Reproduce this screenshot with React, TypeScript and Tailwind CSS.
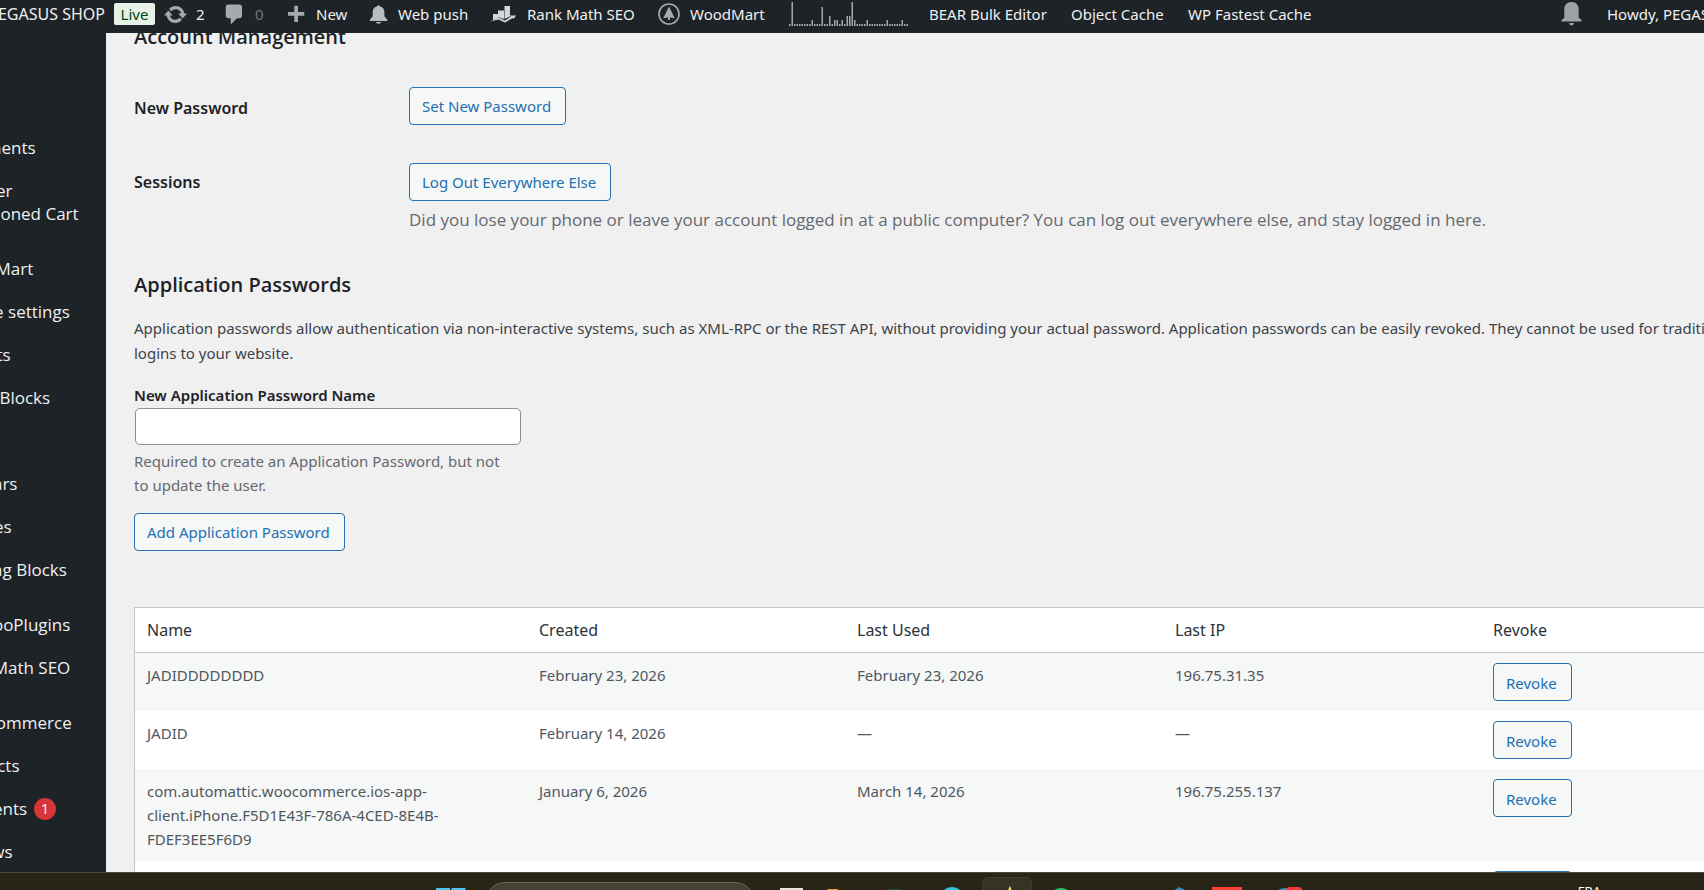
import type { ReactNode } from "react";

interface MenuItem {
  label: string;
  spaced?: boolean;
  badge?: number;
}

interface AppPassword {
  name: string;
  created: string;
  lastUsed: string;
  lastIp: string;
}

const menuItems: MenuItem[] = [
  { label: "Comments" },
  { label: "Recover Abandoned Cart" },
  { label: "WoodMart", spaced: true },
  { label: "Theme settings" },
  { label: "Layouts" },
  { label: "HTML Blocks" },
  { label: "" },
  { label: "Sidebars" },
  { label: "Themes" },
  { label: "Floating Blocks" },
  { label: "My WooPlugins", spaced: true },
  { label: "Rank Math SEO" },
  { label: "WooCommerce", spaced: true },
  { label: "Products" },
  { label: "Payments", badge: 1 },
  { label: "Reviews" },
];

const appPasswords: AppPassword[] = [
  { name: "JADIDDDDDDDD", created: "February 23, 2026", lastUsed: "February 23, 2026", lastIp: "196.75.31.35" },
  { name: "JADID", created: "February 14, 2026", lastUsed: "—", lastIp: "—" },
  {
    name: "com.automattic.woocommerce.ios-app-client.iPhone.F5D1E43F-786A-4CED-8E4B-FDEF3EE5F6D9",
    created: "January 6, 2026",
    lastUsed: "March 14, 2026",
    lastIp: "196.75.255.137",
  },
  { name: "", created: "", lastUsed: "", lastIp: "" },
];

const activity = [
  2, 24, 2, 2, 2, 2, 2, 2, 2, 6, 2, 2, 2, 19, 2, 2, 10, 2, 6, 6, 2, 6, 2, 10,
  10, 24, 6, 2, 2, 2, 2, 6, 2, 2, 2, 2, 2, 2, 2, 6, 2, 2, 2, 2, 2, 6, 2, 2,
];

const Dashicon = ({ d }: { d: string }) => (
  <svg viewBox="0 0 20 20" className="size-[25px] shrink-0 fill-[#a7aaad]" aria-hidden="true">
    <path d={d} />
  </svg>
);

const UPDATE =
  "M10.2 3.28c3.53 0 6.43 2.61 6.92 6h2.08l-3.5 4-3.5-4h2.32c-.45-1.97-2.21-3.45-4.32-3.45-1.45 0-2.73.71-3.54 1.78L4.95 5.66C6.23 4.2 8.11 3.28 10.2 3.28zm-.4 13.44c-3.52 0-6.43-2.61-6.92-6H.8l3.5-4c1.17 1.33 2.33 2.67 3.5 4H5.48c.45 1.97 2.21 3.45 4.32 3.45 1.45 0 2.73-.71 3.54-1.78l1.71 1.95c-1.28 1.46-3.15 2.38-5.25 2.38z";
const COMMENT =
  "M5 2h9q.82 0 1.41.59T16 4v7q0 .82-.59 1.41T14 13h-2l-5 5v-5H5q-.82 0-1.41-.59T3 11V4q0-.82.59-1.41T5 2z";
const PLUS = "M17 8v3h-5v5H9v-5H4V8h5V3h3v5h5z";

const PushBell = () => (
  <svg viewBox="0 0 19 21" className="h-[21px] w-[19px] shrink-0 fill-[#b9bbbd]" aria-hidden="true">
    <path d="M8.3 2.2a1.3 1.3 0 0 1 2.5 0c2.9.6 4.6 2.8 4.6 5.8v4.2l2.9 3.6v1.2H.8v-1.2l2.9-3.6V8c0-3 1.7-5.200 4.600-5.800z" />
    <path d="M6.800 18h5.500a2.800 2.200 0 0 1-5.500 0z" />
  </svg>
);

const RankMath = () => (
  <svg viewBox="0 0 26 18" className="h-[18px] w-[26px] shrink-0 fill-[#d5d7d8]" aria-hidden="true">
    <path d="M3 9h5v4l-5 2zM8 5.500h6v8.500l-6-2zM14.500 1H20v10.500L14.500 14z" />
    <path d="M0 16.500 8.500 12.500l6.500 3 6-4-1.500-1H26l-2.500 3.500-.8-1L15 17.500l-6.500-3z" />
  </svg>
);

const WoodMart = () => (
  <svg viewBox="0 0 22 22" className="size-[22px] shrink-0" aria-hidden="true">
    <circle cx="11" cy="11" r="10" fill="none" stroke="#a7aaad" strokeWidth="1.600" />
    <path d="m11 3.500 5.800 11.800-4.800-.8v2.500h-2v-2.500l-4.800.8z" fill="#a7aaad" />
  </svg>
);

const NoticeBell = () => (
  <svg viewBox="0 0 21 24" className="h-6 w-[21px] shrink-0 fill-[#9ca2a7]" aria-hidden="true">
    <path d="M10.500 0c4.700 0 7.200 3.300 7.200 7.500v8.300l2.800 2.200v1.500H.5V18l2.800-2.200V7.500C3.300 3.300 5.800 0 10.500 0zM8 21h5c-.3 1.600-1.200 2.500-2.500 2.500S8.300 22.600 8 21z" />
  </svg>
);

const ActivityBars = () => (
  <svg viewBox="0 0 120 24" className="h-6 w-[120px] shrink-0 fill-[#a5a8aa]" aria-hidden="true">
    {activity.map((h, i) => (
      <rect key={i} x={i * 2.5} y={24 - h} width="1.500" height={h} />
    ))}
  </svg>
);

const BarLink = ({ className, children }: { className: string; children: ReactNode }) => (
  <a href="#" className={`flex shrink-0 items-center whitespace-nowrap ${className}`}>
    {children}
  </a>
);

const AdminBar = () => (
  <header className="flex h-[33px] shrink-0 items-center overflow-hidden bg-[#1d2327] pb-[5px] text-[15px] text-[#f0f0f1]">
    <a href="#" className="flex w-[105px] shrink-0 justify-end overflow-hidden text-base whitespace-nowrap">
      PEGASUS SHOP
    </a>
    <BarLink className="ml-[9px] h-[22px] w-[41px] justify-center rounded-xs bg-[#e6f2e8] text-[15px] text-[#00450c]">
      Live
    </BarLink>
    <BarLink className="ml-2 w-[59px] gap-2">
      <Dashicon d={UPDATE} />2
    </BarLink>
    <BarLink className="w-[61px] gap-2 text-[#72777c]">
      <Dashicon d={COMMENT} />0
    </BarLink>
    <BarLink className="w-[86px] gap-2">
      <Dashicon d={PLUS} />
      New
    </BarLink>
    <BarLink className="w-[121px] gap-[10px]">
      <PushBell />
      Web push
    </BarLink>
    <BarLink className="w-[168px] gap-[11px]">
      <RankMath />
      Rank Math SEO
    </BarLink>
    <BarLink className="w-[131px] gap-[10px]">
      <WoodMart />
      WoodMart
    </BarLink>
    <BarLink className="w-[140px]">
      <ActivityBars />
    </BarLink>
    <BarLink className="w-[142px]">BEAR Bulk Editor</BarLink>
    <BarLink className="w-[117px]">Object Cache</BarLink>
    <BarLink className="">WP Fastest Cache</BarLink>
    <div className="ml-auto flex w-[143px] shrink-0 gap-[25px] overflow-hidden">
      <button type="button" aria-label="Notifications">
        <NoticeBell />
      </button>
      <BarLink className="">Howdy, PEGASUS SHOP</BarLink>
    </div>
  </header>
);

const Sidebar = () => (
  <nav className="w-[106px] shrink-0 overflow-hidden bg-[#1d2327] pt-[93px]">
    <ul className="-ml-24 w-[200px] font-['Open_Sans',sans-serif] text-[17px] leading-[23px] text-[#f0f0f1]">
      {menuItems.map((item, i) => (
        <li key={i} className={item.spaced ? "mt-3" : ""}>
          <a href="#" className="flex min-h-[43px] items-center gap-[7px] py-[10px] pr-4 pl-[45px]">
            {item.label}
            {item.badge && (
              <span className="flex size-[22px] items-center justify-center rounded-full bg-[#d63638] text-sm text-white">
                {item.badge}
              </span>
            )}
          </a>
        </li>
      ))}
    </ul>
  </nav>
);

const Button = ({ children }: { children: ReactNode }) => (
  <button
    type="button"
    className="flex h-[38px] items-center rounded-[4px] border border-[#2271b1] bg-[#f6f7f7] pt-px pr-[14px] pl-3 text-[15px] whitespace-nowrap text-[#2271b1]"
  >
    {children}
  </button>
);

const Heading = ({ children }: { children: ReactNode }) => (
  <h2 className="font-['Open_Sans',sans-serif] text-xl leading-7 font-semibold">{children}</h2>
);

const AccountManagement = () => (
  <section>
    <Heading>Account Management</Heading>
    <div className="mt-9 flex">
      <h3 className="w-[275px] pt-[9px] text-base leading-6 font-semibold">New Password</h3>
      <Button>Set New Password</Button>
    </div>
    <div className="mt-[38px] flex">
      <h3 className="w-[275px] pt-[7px] text-base leading-6 font-semibold">Sessions</h3>
      <div>
        <Button>Log Out Everywhere Else</Button>
        <p className="mt-[7px] font-['Open_Sans',sans-serif] text-[17px] leading-6 text-[#646970]">
          Did you lose your phone or leave your account logged in at a public computer? You can log out everywhere
          else, and stay logged in here.
        </p>
      </div>
    </div>
  </section>
);

const ApplicationPasswords = () => (
  <section className="pt-[39px]">
    <Heading>Application Passwords</Heading>
    <p className="mt-[17px] mr-9 text-[15px] leading-[25px] text-[#3c434a]">
      Application passwords allow authentication via non-interactive systems, such as XML-RPC or the REST API, without
      providing your actual password. Application passwords can be easily revoked. They cannot be used for traditional
      logins to your website.
    </p>
    <div className="mt-[17px] w-[388px]">
      <label htmlFor="app-password-name" className="block pb-px text-[15px] leading-6 font-semibold">
        New Application Password Name
      </label>
      <div className="px-px">
        <input
          id="app-password-name"
          type="text"
          className="block h-[37px] w-full rounded-[5px] border border-[#8c8f94] bg-white px-2 text-[15px]"
        />
      </div>
      <p className="mt-1 mr-3 text-[15px] leading-6 text-[#646970]">
        Required to create an Application Password, but not to update the user.
      </p>
    </div>
    <div className="mt-4">
      <Button>Add Application Password</Button>
    </div>
    <table className="mt-14 w-full table-fixed border-separate border-spacing-0 border border-[#c3c4c7] bg-white text-left">
      <thead>
        <tr className="h-[45px] text-base text-[#2c3338]">
          <th className="w-[392px] border-b border-[#c3c4c7] px-3 font-normal">Name</th>
          <th className="border-b border-[#c3c4c7] px-3 font-normal">Created</th>
          <th className="border-b border-[#c3c4c7] px-3 font-normal">Last Used</th>
          <th className="border-b border-[#c3c4c7] px-3 font-normal">Last IP</th>
          <th className="border-b border-[#c3c4c7] px-3 font-normal">Revoke</th>
        </tr>
      </thead>
      <tbody className="text-[15px] leading-6 text-[#50575e]">
        {appPasswords.map((row, i) => (
          <tr key={i} className="align-top odd:bg-[#f6f7f7]">
            <td className="px-3 py-[10px] pr-16">{row.name}</td>
            <td className="px-3 py-[10px]">{row.created}</td>
            <td className="px-3 py-[10px]">{row.lastUsed}</td>
            <td className="px-3 py-[10px]">{row.lastIp}</td>
            <td className="px-3 py-[10px]">
              <Button>Revoke</Button>
            </td>
          </tr>
        ))}
      </tbody>
    </table>
  </section>
);

const TaskButton = ({ active, label, children }: { active?: boolean; label: string; children?: ReactNode }) => (
  <button
    type="button"
    aria-label={label}
    className={`h-12 w-[50px] shrink-0 rounded-md ${active ? "border border-[#3f3c30] bg-[#353226]" : ""}`}
  >
    <svg viewBox="0 0 50 48" className="h-full w-full">
      {children}
    </svg>
  </button>
);

const Taskbar = () => (
  <footer className="flex h-[18px] shrink-0 items-start gap-1 overflow-hidden border-t border-[#4a4740] bg-[#282416] pt-1 pl-[25%]">
    <TaskButton label="Start">
      <path d="M10 11h14v14H10zM25.500 11h14v14h-14z" fill="#4cc2f1" />
    </TaskButton>
    <div className="mx-[5px] mt-[5px] h-10 w-[270px] shrink-0 rounded-full border border-[#69665a] bg-[#454235]" />
    <div className="ml-[2px] flex gap-1">
      <TaskButton label="Task view">
        <rect x="14" y="11" width="23" height="20" fill="#e8e6e4" />
      </TaskButton>
      <TaskButton label="Files">
        <rect x="7" y="12" width="11" height="20" rx="1" fill="#e0a010" />
      </TaskButton>
      <TaskButton label="Store">
        <rect x="13" y="12" width="16" height="20" rx="2" fill="#1d4a50" />
      </TaskButton>
      <TaskButton label="Edge">
        <circle cx="24" cy="23" r="13" fill="#35c1d8" />
      </TaskButton>
      <TaskButton label="Notes" active>
        <path d="m28 8 6 16H22z" fill="#ffe24a" />
      </TaskButton>
      <TaskButton label="WhatsApp">
        <circle cx="25" cy="23" r="12" fill="#25c35a" />
      </TaskButton>
      <TaskButton label="Desktop" />
      <TaskButton label="Code">
        <path d="m35 10 6 3v20H28V15z" fill="#1f8fd8" />
      </TaskButton>
      <TaskButton label="Mail">
        <rect x="14" y="10" width="30" height="20" fill="#ff4034" />
      </TaskButton>
      <TaskButton label="Telegram">
        <circle cx="33" cy="23" r="12" fill="#2a94cc" />
        <rect x="33" y="10" width="18" height="16" rx="5" fill="#f83a36" />
      </TaskButton>
    </div>
    <span className="mt-[6px] mr-[103px] ml-auto text-[13px] leading-4 text-white">FRA</span>
  </footer>
);

const App = () => {
  return (
    <div className="flex h-screen flex-col overflow-hidden bg-[#f0f0f1] font-['Noto_Sans','Open_Sans',sans-serif] text-[#1d2327]">
      <AdminBar />
      <div className="flex min-h-0 flex-1">
        <Sidebar />
        <main className="min-w-0 flex-1 overflow-hidden pl-7">
          <div className="-mt-[10px] -mr-24">
            <AccountManagement />
            <ApplicationPasswords />
          </div>
        </main>
      </div>
      <Taskbar />
    </div>
  );
};

export default App;
